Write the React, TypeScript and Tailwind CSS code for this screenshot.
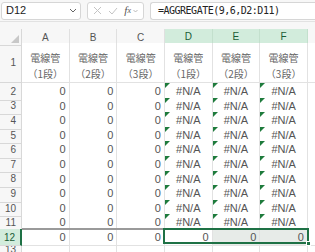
import React from "react";

const COLS = ["A", "B", "C", "D", "E", "F"];
const font = { fontFamily: '"Liberation Sans", "Noto Sans CJK JP", sans-serif' };

function ErrTri() {
  return <span className="absolute left-0 top-0 h-0 w-0 border-t-[5px] border-r-[5px] border-t-[#1e7b3c] border-r-transparent" />;
}

export default function App() {
  const rows = [2, 3, 4, 5, 6, 7, 8, 9, 10, 11];
  return (
    <div className="w-[315px] h-[252px] overflow-hidden bg-[#f7f7f7] text-[11px] text-[#333]" style={font}>
      {/* formula bar */}
      <div className="flex h-[22px] items-center gap-[6px] pl-[1px] border-b border-[#e2e2e2]">
        <div className="flex h-[18px] w-[80px] items-center justify-between rounded-[3px] border border-[#d6d6d6] bg-white pl-[4px] pr-[3px]">
          <span className="text-[11px] text-[#222]">D12</span>
          <svg width="8" height="5" viewBox="0 0 8 5"><path d="M1 1l3 3 3-3" fill="none" stroke="#666" strokeWidth="1" /></svg>
        </div>
        <div className="flex h-[18px] w-[57px] items-center justify-around rounded-[3px] border border-[#d6d6d6] bg-white px-[2px]">
          <svg width="9" height="9" viewBox="0 0 9 9"><path d="M1 1l7 7M8 1L1 8" stroke="#c4c4c4" strokeWidth="1" /></svg>
          <svg width="10" height="8" viewBox="0 0 10 8"><path d="M1 4l3 3 5-6" fill="none" stroke="#c4c4c4" strokeWidth="1" /></svg>
          <span className="flex items-center text-[11px] italic text-[#555]" style={{ fontFamily: '"Liberation Serif", serif' }}>
            f<span className="text-[8px] italic">x</span>
            <svg className="ml-[2px]" width="5" height="4" viewBox="0 0 5 4"><path d="M0.5 1l2 2 2-2" fill="none" stroke="#aaa" strokeWidth="0.8" /></svg>
          </span>
        </div>
        <div className="flex h-[18px] flex-1 items-center rounded-l-[3px] border border-r-0 border-[#d6d6d6] bg-white pl-[7px]">
          <span className="text-[10px] tracking-[-0.5px] text-[#222]" style={{ fontFamily: '"DejaVu Sans Mono", monospace' }}>=AGGREGATE(9,6,D2:D11)</span>
        </div>
      </div>
      <div className="h-[7px]" />
      {/* column header */}
      <div className="grid h-[14px] grid-cols-[22px_repeat(6,47.67px)_1fr] text-[10px] text-[#555]">
        <div className="relative border-r border-b border-[#d8d8d8]">
          <span className="absolute right-[2px] bottom-[2px] h-0 w-0 border-b-[8px] border-l-[8px] border-b-[#c8c8c8] border-l-transparent" />
        </div>
        {COLS.map((c, i) =>
          i >= 3 ? (
            <div key={c} className="flex items-center justify-center border-r border-[#c3e0cd] border-b-2 border-b-[#1e7145] bg-[#d2ecdc] text-[#1a5c36]">{c}</div>
          ) : (
            <div key={c} className="flex items-center justify-center border-r border-b border-[#e0e0e0]">{c}</div>
          )
        )}
        <div className="border-b border-[#e0e0e0]" />
      </div>
      {/* row 1 */}
      <div className="grid h-[40px] grid-cols-[22px_repeat(6,47.67px)_1fr]">
        <div className="flex items-center justify-end border-r border-b border-[#d8d8d8] pr-[5px] text-[10px] text-[#555]">1</div>
        {COLS.map((c, i) => (
          <div key={c} className="flex flex-col items-center justify-start gap-[4px] border-r border-b border-[#e2e2e2] bg-white pt-[9px] text-[10px] leading-[12px] text-[#666]" style={{ fontFamily: '"Noto Sans CJK JP", sans-serif' }}>
            <span>電線管</span>
            <span>（{(i % 3) + 1}段）</span>
          </div>
        ))}
        <div className="border-b border-[#e2e2e2] bg-white" />
      </div>
      {rows.map((r) => (
        <div key={r} className="grid h-[14.6px] grid-cols-[22px_repeat(6,47.67px)_1fr]">
          <div className="flex items-center justify-end border-r border-b border-[#d8d8d8] pr-[5px] text-[10px] text-[#555]">{r}</div>
          {COLS.map((c, i) =>
            i < 3 ? (
              <div key={c} className="flex items-center justify-end border-r border-b border-[#e2e2e2] bg-white pr-[3px] text-[#555]">0</div>
            ) : (
              <div key={c} className="relative flex items-center justify-center border-r border-b border-[#e2e2e2] bg-white text-[#555]">
                <ErrTri />#N/A
              </div>
            )
          )}
          <div className="border-b border-[#e2e2e2] bg-white" />
        </div>
      ))}
      {/* row 12 */}
      <div className="relative grid h-[14.6px] grid-cols-[22px_repeat(6,47.67px)_1fr]">
        <div className="flex items-center justify-end border-r-2 border-r-[#1e7145] border-b border-[#d8d8d8] bg-[#d2ecdc] pr-[5px] text-[10px] text-[#1a5c36]">12</div>
        {COLS.map((c, i) => (
          <div key={c} className={`flex items-center justify-end border-r border-b border-[#e2e2e2] pr-[3px] text-[#555] ${i >= 4 ? "bg-[#e7ebe8]" : "bg-white"}`}>0</div>
        ))}
        <div className="border-b border-[#e2e2e2] bg-white" />
        <div className="absolute left-[22px] top-[-1px] h-[2px] w-[142px] bg-[#9a9a9a]" />
        <div className="absolute left-[163px] top-[-1px] h-[16px] w-[146px] border-2 border-[#1e7145]" />
        <div className="absolute left-[306px] top-[12px] h-[5px] w-[5px] border border-white bg-[#1e7145]" />
      </div>
      <div className="grid h-[14px] grid-cols-[22px_repeat(6,47.67px)_1fr]">
        <div className="flex items-start justify-end border-r border-[#d8d8d8] pr-[5px] text-[10px] leading-[12px] text-[#555]">13</div>
        {COLS.map((c) => (
          <div key={c} className="border-r border-[#e2e2e2] bg-white" />
        ))}
        <div className="bg-white" />
      </div>
    </div>
  );
}
